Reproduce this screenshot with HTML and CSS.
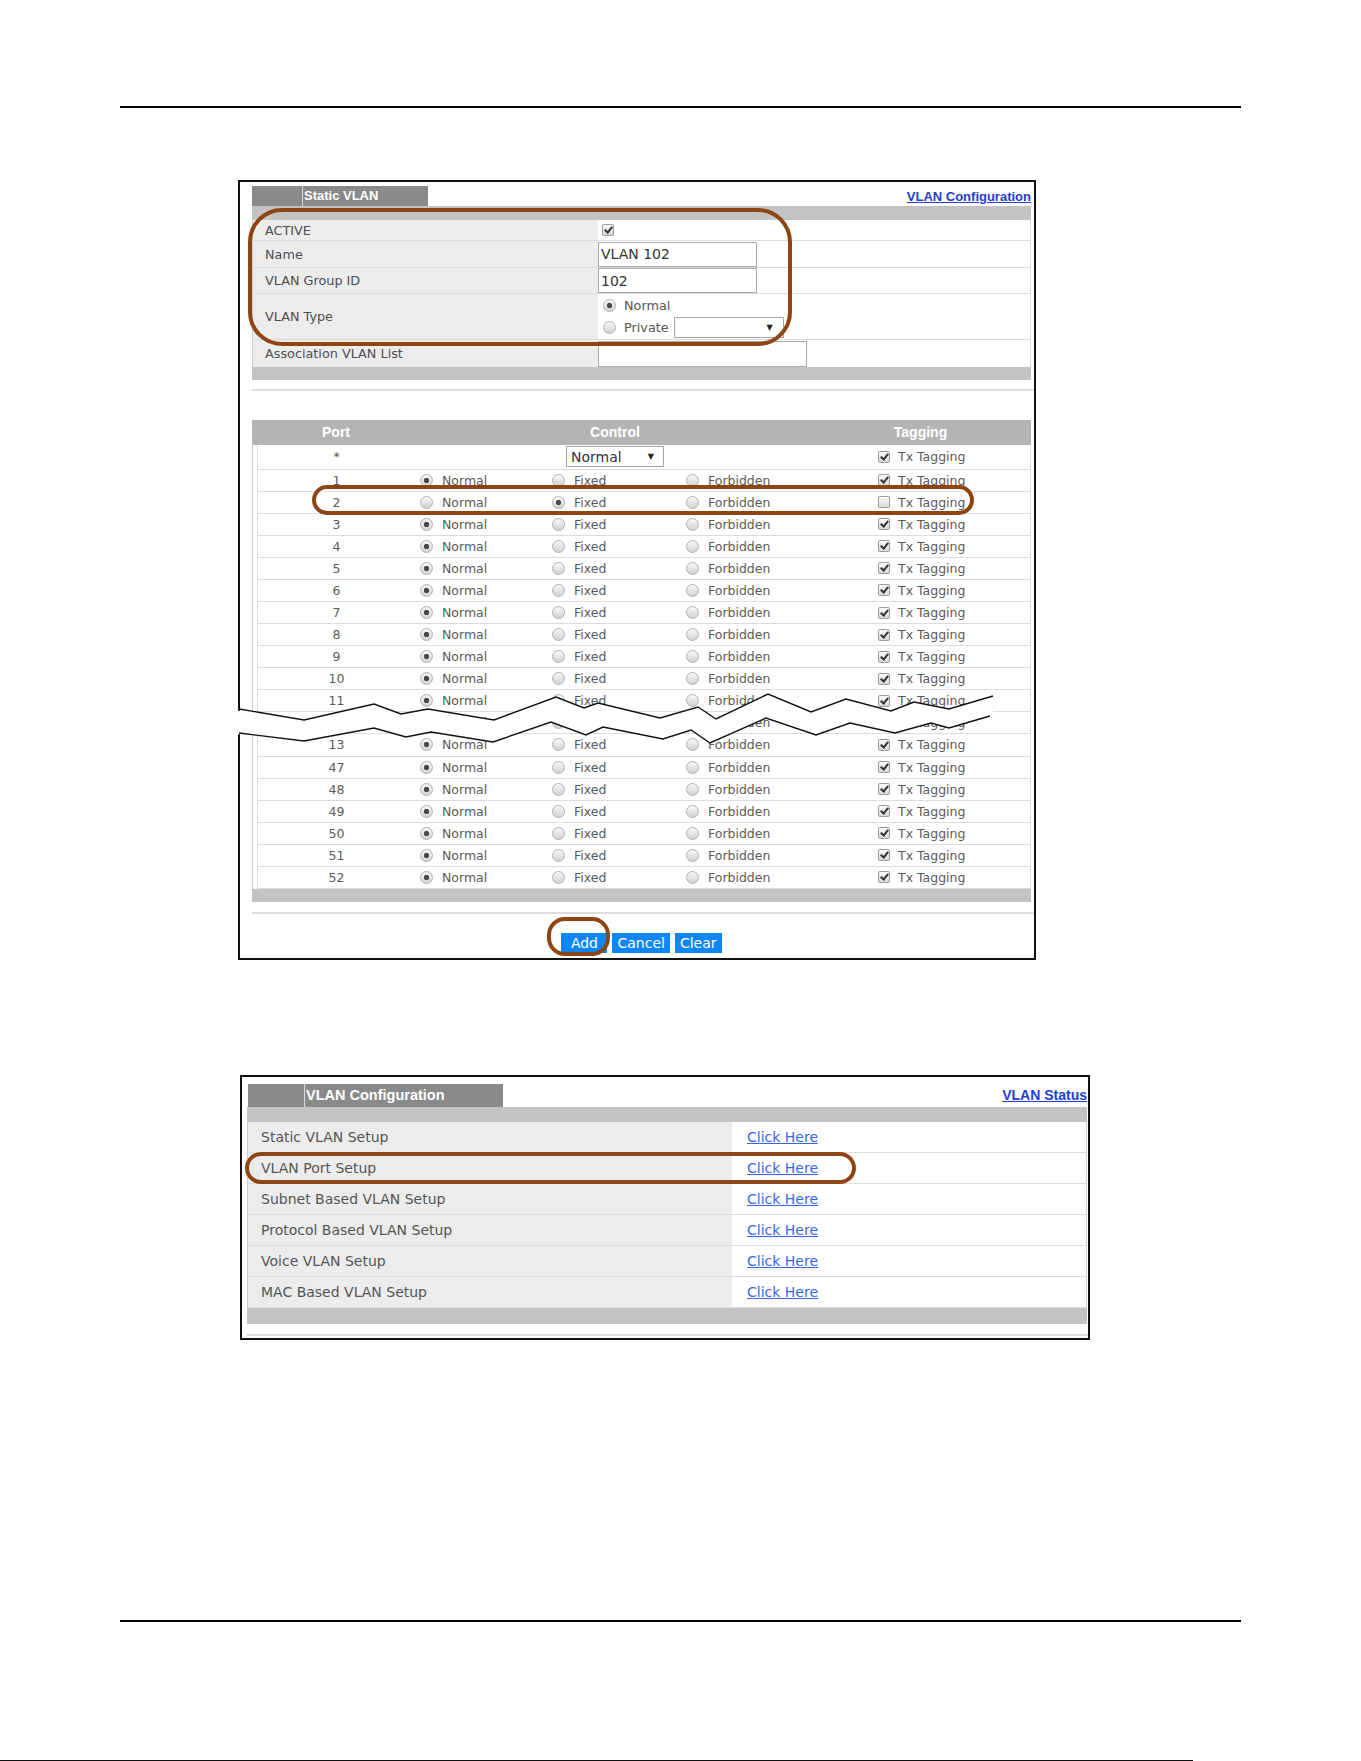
FILE: index.html
```html
<!DOCTYPE html>
<html lang="en">
<head>
    <meta charset="UTF-8">
    <meta name="viewport" content="width=device-width, initial-scale=1.0">
    <title>Static VLAN</title>
    <link rel="stylesheet" href="styles.css">
</head>
<body>
<div class="page">
    <div class="rule"></div>

    <!-- Static VLAN screen -->
    <div class="panel panel-static">
        <div class="tabbar">
            <div class="tab"><span class="tab-cap"></span><span class="tab-name">Static VLAN</span></div>
            <a href="#" class="tab-link">VLAN Configuration</a>
        </div>
        <div class="bar"></div>

        <div class="form">
            <div class="frow r-active">
                <div class="flabel">ACTIVE</div>
                <div class="fvalue"><input type="checkbox" class="cb" checked></div>
            </div>
            <div class="frow r-name">
                <div class="flabel">Name</div>
                <div class="fvalue"><input type="text" class="txt" value="VLAN 102"></div>
            </div>
            <div class="frow r-gid">
                <div class="flabel">VLAN Group ID</div>
                <div class="fvalue"><input type="text" class="txt" value="102"></div>
            </div>
            <div class="frow r-type">
                <div class="flabel">VLAN Type</div>
                <div class="fvalue type-opts">
                    <label class="opt"><input type="radio" class="rd" name="vtype" checked><span>Normal</span></label>
                    <label class="opt"><input type="radio" class="rd" name="vtype"><span>Private</span><span class="sel sel-private"></span></label>
                </div>
            </div>
            <div class="frow r-assoc">
                <div class="flabel">Association VLAN List</div>
                <div class="fvalue"><input type="text" class="txt txt-wide"></div>
            </div>
        </div>
        <div class="bar bar-thin"></div>
        <div class="sep"></div>

        <div class="phead"><span>Port</span><span>Control</span><span>Tagging</span></div>
        <div class="plist">
            <div class="prow prow-all">
                <span class="pnum">*</span>
                <div class="psel"><span class="sel sel-control">Normal</span></div>
                <label class="pc pc-tag"><input type="checkbox" class="cb" checked>Tx Tagging</label>
            </div>
            <div class="prow">
                <span class="pnum">1</span>
                <label class="pc pc-normal"><input type="radio" class="rd" name="p1" checked>Normal</label>
                <label class="pc"><input type="radio" class="rd" name="p1">Fixed</label>
                <label class="pc"><input type="radio" class="rd" name="p1">Forbidden</label>
                <label class="pc pc-tag"><input type="checkbox" class="cb" checked>Tx Tagging</label>
            </div>
            <div class="prow">
                <span class="pnum">2</span>
                <label class="pc pc-normal"><input type="radio" class="rd" name="p2">Normal</label>
                <label class="pc"><input type="radio" class="rd" name="p2" checked>Fixed</label>
                <label class="pc"><input type="radio" class="rd" name="p2">Forbidden</label>
                <label class="pc pc-tag"><input type="checkbox" class="cb">Tx Tagging</label>
            </div>
            <div class="prow">
                <span class="pnum">3</span>
                <label class="pc pc-normal"><input type="radio" class="rd" name="p3" checked>Normal</label>
                <label class="pc"><input type="radio" class="rd" name="p3">Fixed</label>
                <label class="pc"><input type="radio" class="rd" name="p3">Forbidden</label>
                <label class="pc pc-tag"><input type="checkbox" class="cb" checked>Tx Tagging</label>
            </div>
            <div class="prow">
                <span class="pnum">4</span>
                <label class="pc pc-normal"><input type="radio" class="rd" name="p4" checked>Normal</label>
                <label class="pc"><input type="radio" class="rd" name="p4">Fixed</label>
                <label class="pc"><input type="radio" class="rd" name="p4">Forbidden</label>
                <label class="pc pc-tag"><input type="checkbox" class="cb" checked>Tx Tagging</label>
            </div>
            <div class="prow">
                <span class="pnum">5</span>
                <label class="pc pc-normal"><input type="radio" class="rd" name="p5" checked>Normal</label>
                <label class="pc"><input type="radio" class="rd" name="p5">Fixed</label>
                <label class="pc"><input type="radio" class="rd" name="p5">Forbidden</label>
                <label class="pc pc-tag"><input type="checkbox" class="cb" checked>Tx Tagging</label>
            </div>
            <div class="prow">
                <span class="pnum">6</span>
                <label class="pc pc-normal"><input type="radio" class="rd" name="p6" checked>Normal</label>
                <label class="pc"><input type="radio" class="rd" name="p6">Fixed</label>
                <label class="pc"><input type="radio" class="rd" name="p6">Forbidden</label>
                <label class="pc pc-tag"><input type="checkbox" class="cb" checked>Tx Tagging</label>
            </div>
            <div class="prow">
                <span class="pnum">7</span>
                <label class="pc pc-normal"><input type="radio" class="rd" name="p7" checked>Normal</label>
                <label class="pc"><input type="radio" class="rd" name="p7">Fixed</label>
                <label class="pc"><input type="radio" class="rd" name="p7">Forbidden</label>
                <label class="pc pc-tag"><input type="checkbox" class="cb" checked>Tx Tagging</label>
            </div>
            <div class="prow">
                <span class="pnum">8</span>
                <label class="pc pc-normal"><input type="radio" class="rd" name="p8" checked>Normal</label>
                <label class="pc"><input type="radio" class="rd" name="p8">Fixed</label>
                <label class="pc"><input type="radio" class="rd" name="p8">Forbidden</label>
                <label class="pc pc-tag"><input type="checkbox" class="cb" checked>Tx Tagging</label>
            </div>
            <div class="prow">
                <span class="pnum">9</span>
                <label class="pc pc-normal"><input type="radio" class="rd" name="p9" checked>Normal</label>
                <label class="pc"><input type="radio" class="rd" name="p9">Fixed</label>
                <label class="pc"><input type="radio" class="rd" name="p9">Forbidden</label>
                <label class="pc pc-tag"><input type="checkbox" class="cb" checked>Tx Tagging</label>
            </div>
            <div class="prow">
                <span class="pnum">10</span>
                <label class="pc pc-normal"><input type="radio" class="rd" name="p10" checked>Normal</label>
                <label class="pc"><input type="radio" class="rd" name="p10">Fixed</label>
                <label class="pc"><input type="radio" class="rd" name="p10">Forbidden</label>
                <label class="pc pc-tag"><input type="checkbox" class="cb" checked>Tx Tagging</label>
            </div>
            <div class="prow">
                <span class="pnum">11</span>
                <label class="pc pc-normal"><input type="radio" class="rd" name="p11" checked>Normal</label>
                <label class="pc"><input type="radio" class="rd" name="p11">Fixed</label>
                <label class="pc"><input type="radio" class="rd" name="p11">Forbidden</label>
                <label class="pc pc-tag"><input type="checkbox" class="cb" checked>Tx Tagging</label>
            </div>
            <div class="prow">
                <span class="pnum">12</span>
                <label class="pc pc-normal"><input type="radio" class="rd" name="p12" checked>Normal</label>
                <label class="pc"><input type="radio" class="rd" name="p12">Fixed</label>
                <label class="pc"><input type="radio" class="rd" name="p12">Forbidden</label>
                <label class="pc pc-tag"><input type="checkbox" class="cb" checked>Tx Tagging</label>
            </div>
            <div class="prow">
                <span class="pnum">13</span>
                <label class="pc pc-normal"><input type="radio" class="rd" name="p13" checked>Normal</label>
                <label class="pc"><input type="radio" class="rd" name="p13">Fixed</label>
                <label class="pc"><input type="radio" class="rd" name="p13">Forbidden</label>
                <label class="pc pc-tag"><input type="checkbox" class="cb" checked>Tx Tagging</label>
            </div>
            <div class="prow">
                <span class="pnum">47</span>
                <label class="pc pc-normal"><input type="radio" class="rd" name="p47" checked>Normal</label>
                <label class="pc"><input type="radio" class="rd" name="p47">Fixed</label>
                <label class="pc"><input type="radio" class="rd" name="p47">Forbidden</label>
                <label class="pc pc-tag"><input type="checkbox" class="cb" checked>Tx Tagging</label>
            </div>
            <div class="prow">
                <span class="pnum">48</span>
                <label class="pc pc-normal"><input type="radio" class="rd" name="p48" checked>Normal</label>
                <label class="pc"><input type="radio" class="rd" name="p48">Fixed</label>
                <label class="pc"><input type="radio" class="rd" name="p48">Forbidden</label>
                <label class="pc pc-tag"><input type="checkbox" class="cb" checked>Tx Tagging</label>
            </div>
            <div class="prow">
                <span class="pnum">49</span>
                <label class="pc pc-normal"><input type="radio" class="rd" name="p49" checked>Normal</label>
                <label class="pc"><input type="radio" class="rd" name="p49">Fixed</label>
                <label class="pc"><input type="radio" class="rd" name="p49">Forbidden</label>
                <label class="pc pc-tag"><input type="checkbox" class="cb" checked>Tx Tagging</label>
            </div>
            <div class="prow">
                <span class="pnum">50</span>
                <label class="pc pc-normal"><input type="radio" class="rd" name="p50" checked>Normal</label>
                <label class="pc"><input type="radio" class="rd" name="p50">Fixed</label>
                <label class="pc"><input type="radio" class="rd" name="p50">Forbidden</label>
                <label class="pc pc-tag"><input type="checkbox" class="cb" checked>Tx Tagging</label>
            </div>
            <div class="prow">
                <span class="pnum">51</span>
                <label class="pc pc-normal"><input type="radio" class="rd" name="p51" checked>Normal</label>
                <label class="pc"><input type="radio" class="rd" name="p51">Fixed</label>
                <label class="pc"><input type="radio" class="rd" name="p51">Forbidden</label>
                <label class="pc pc-tag"><input type="checkbox" class="cb" checked>Tx Tagging</label>
            </div>
            <div class="prow">
                <span class="pnum">52</span>
                <label class="pc pc-normal"><input type="radio" class="rd" name="p52" checked>Normal</label>
                <label class="pc"><input type="radio" class="rd" name="p52">Fixed</label>
                <label class="pc"><input type="radio" class="rd" name="p52">Forbidden</label>
                <label class="pc pc-tag"><input type="checkbox" class="cb" checked>Tx Tagging</label>
            </div>
        </div>
        <div class="bar bar-thin"></div>
        <div class="sep sep-low"></div>

        <div class="buttons">
            <button class="btn">Add</button>
            <button class="btn">Cancel</button>
            <button class="btn">Clear</button>
        </div>

        <!-- torn-out band between port 11 and 13 -->
        <svg class="break" viewBox="228 180 810 790" width="810" height="790">
            <polygon fill="#fff" points="226,709 304,720 374,704 401,714 428,709 494,720 556,697 584,708 598,703 660,718 698,707 716,719 768,694 811,712 846,699 891,711 914,702 949,709 993,696 993,716 949,728 931,723 895,733 850,723 816,735 766,718 710,743 691,730 663,739 603,727 586,735 551,722 493,742 431,732 406,737 374,728 304,741 226,733"/>
            <polyline fill="none" stroke="#111" stroke-width="1.4" points="239,709 304,720 374,704 401,714 428,709 494,720 556,697 584,708 598,703 660,718 698,707 716,719 768,694 811,712 846,699 891,711 914,702 949,709 993,696"/>
            <polyline fill="none" stroke="#111" stroke-width="1.4" points="239,733 304,741 374,728 406,737 431,732 493,742 551,722 586,735 603,727 663,739 691,730 710,743 766,718 816,735 850,723 895,733 931,723 949,728 990,716"/>
        </svg>

        <div class="mark mark-form"></div>
        <div class="mark mark-port"></div>
        <div class="mark mark-add"></div>
    </div>

    <!-- VLAN Configuration screen -->
    <div class="panel panel-config">
        <div class="tabbar">
            <div class="tab"><span class="tab-cap"></span><span class="tab-name">VLAN Configuration</span></div>
            <a href="#" class="tab-link">VLAN Status</a>
        </div>
        <div class="bar"></div>
        <div class="clist">
            <div class="crow"><div class="clabel">Static VLAN Setup</div><div class="cvalue"><a href="#">Click Here</a></div></div>
            <div class="crow"><div class="clabel">VLAN Port Setup</div><div class="cvalue"><a href="#">Click Here</a></div></div>
            <div class="crow"><div class="clabel">Subnet Based VLAN Setup</div><div class="cvalue"><a href="#">Click Here</a></div></div>
            <div class="crow"><div class="clabel">Protocol Based VLAN Setup</div><div class="cvalue"><a href="#">Click Here</a></div></div>
            <div class="crow"><div class="clabel">Voice VLAN Setup</div><div class="cvalue"><a href="#">Click Here</a></div></div>
            <div class="crow"><div class="clabel">MAC Based VLAN Setup</div><div class="cvalue"><a href="#">Click Here</a></div></div>
        </div>
        <div class="bar bar-foot"></div>
        <div class="sep"></div>

        <div class="mark mark-portsetup"></div>
    </div>

    <div class="rule rule-bottom"></div>
    <div class="page-edge"></div>
</div>
</body>
</html>
```

FILE: styles.css
```css
html, body {
    margin: 0;
    overflow: hidden;
}
body {
    background: #fff;
    font-family: "DejaVu Sans", sans-serif;
    color: #555;
}
.page {
    height: 1761px;
    box-sizing: border-box;
    padding-top: 106px;
}
.rule {
    width: 1121px;
    height: 2px;
    margin-left: 120px;
    background: #000;
}
.rule-bottom {
    margin-top: 280px;
}
.page-edge {
    width: 1193px;
    height: 2px;
    margin-top: 138px;
    background: #111;
}

/* framed screenshots */
.panel {
    position: relative;
    box-sizing: border-box;
    border: 2px solid #111;
}
.panel-static {
    width: 798px;
    margin: 72px 0 0 238px;
    padding: 4px 3px 5px 12px;
}
.panel-config {
    width: 850px;
    margin: 115px 0 0 240px;
    padding: 7px 1px 1px 5px;
}

.tabbar {
    display: flex;
    justify-content: space-between;
    align-items: center;
    height: 20px;
}
.tab {
    display: flex;
    height: 100%;
    background: #8a8a8a;
}
.tab-cap {
    width: 50px;
    border-right: 1px solid #d9d9d9;
}
.tab-name {
    width: 124px;
    padding-left: 1px;
    color: #fff;
    font: bold 13px/20px "Liberation Sans", Arial, sans-serif;
}
.tab-link {
    color: #1d3ecf;
    font: bold 13px "Liberation Sans", Arial, sans-serif;
    text-decoration: underline;
}
.panel-config .tabbar {
    height: 23px;
}
.panel-config .tab {
    margin-left: 1px;
}
.panel-config .tab-cap {
    width: 56px;
}
.panel-config .tab-name {
    width: 197px;
    font-size: 14.5px;
    line-height: 23px;
}
.panel-config .tab-link {
    font-size: 14px;
}

.bar {
    height: 14px;
    background: #c3c3c3;
}
.bar-thin {
    height: 13px;
}
.panel-config .bar {
    height: 15px;
}
.panel-config .bar-foot {
    height: 16px;
}
.sep {
    height: 2px;
    margin: 9px -3px 29px 0;
    background: #dedede;
}
.sep-low {
    margin: 10px -3px 19px 0;
}
.panel-config .sep {
    margin: 10px -1px 1px 0;
}

/* form controls */
.rd {
    appearance: none;
    -webkit-appearance: none;
    box-sizing: border-box;
    flex: none;
    width: 13px;
    height: 13px;
    margin: 0;
    border: 1px solid #b0b0b0;
    border-radius: 50%;
    background: linear-gradient(#f8f8f8, #d2d2d2);
}
.rd:checked {
    background: radial-gradient(circle, #4a4a4a 0 2.4px, transparent 3px), linear-gradient(#f8f8f8, #d2d2d2);
}
.cb {
    appearance: none;
    -webkit-appearance: none;
    position: relative;
    box-sizing: border-box;
    flex: none;
    width: 12px;
    height: 12px;
    margin: 0;
    border: 1px solid #9c9c9c;
    border-radius: 2px;
    background: linear-gradient(#fbfbfb, #d8d8d8);
}
.cb:checked::after {
    content: "";
    position: absolute;
    left: 3px;
    top: 0;
    width: 3px;
    height: 6px;
    border: solid #333;
    border-width: 0 2px 2px 0;
    transform: rotate(40deg);
}
.txt {
    box-sizing: border-box;
    width: 159px;
    height: 25px;
    margin: 0;
    padding: 0 2px;
    border: 1px solid #a9a9a9;
    font: 14px "DejaVu Sans", sans-serif;
    color: #333;
    outline: none;
}
.txt-wide {
    width: 209px;
    height: 26px;
}
.sel {
    box-sizing: border-box;
    display: flex;
    align-items: center;
    justify-content: space-between;
    height: 21px;
    border: 1px solid #a6a6a6;
    background: #fff;
    font-size: 14px;
    color: #333;
}
.sel::after {
    content: "\25BC";
    font-size: 8px;
    color: #222;
}
.sel-private {
    width: 110px;
    margin-left: -3px;
    justify-content: flex-end;
    padding-right: 10px;
}
.sel-control {
    width: 98px;
    padding: 0 9px 0 4px;
}

/* Static VLAN form */
.form {
    border-left: 1px solid #d0d0d0;
    border-right: 1px solid #dcdcdc;
}
.frow {
    display: grid;
    grid-template-columns: 345px 1fr;
    box-sizing: border-box;
    border-bottom: 1px solid #dcdcdc;
}
.frow:last-child {
    border-bottom: 0;
}
.flabel {
    display: flex;
    align-items: center;
    padding-left: 12px;
    background: #ececec;
    font-size: 12.8px;
    color: #4f4f4f;
}
.fvalue {
    display: flex;
    align-items: center;
}
.r-active { height: 21px; }
.r-name { height: 27px; }
.r-gid { height: 26px; }
.r-type { height: 46px; }
.r-assoc { height: 27px; }
.r-active .fvalue {
    padding-left: 4px;
}
.type-opts {
    flex-direction: column;
    align-items: flex-start;
    gap: 1px;
    padding: 1px 0 0 5px;
}
.opt {
    display: flex;
    align-items: center;
    gap: 8px;
    height: 21px;
    font-size: 12.8px;
    color: #555;
}

/* port table */
.phead {
    display: grid;
    grid-template-columns: 168px 390px 1fr;
    height: 25px;
    background: #b4b4b4;
    color: #fff;
    font: bold 14px/25px "Liberation Sans", Arial, sans-serif;
    text-align: center;
}
.plist {
    border-left: 1px solid #c8c8c8;
}
.prow {
    display: grid;
    grid-template-columns: 157px 137px 134px 192px 1fr;
    align-items: center;
    box-sizing: border-box;
    height: 22.08px;
    margin-left: 4px;
    border-left: 1px solid #dcdcdc;
    border-right: 1px solid #dcdcdc;
    border-bottom: 1px solid #dcdcdc;
    font-size: 12.5px;
    color: #5a5a5a;
}
.prow-all {
    height: 24.5px;
}
.pnum {
    text-align: center;
}
.pc {
    display: flex;
    align-items: center;
    gap: 9px;
}
.pc-normal {
    padding-left: 5px;
}
.pc-tag {
    gap: 8px;
}
.psel {
    grid-column: 2 / 5;
    padding-left: 151px;
}

.buttons {
    display: flex;
    justify-content: center;
    gap: 5px;
    height: 20px;
}
.btn {
    box-sizing: border-box;
    min-width: 46px;
    height: 20px;
    padding: 0 5px;
    border: 0;
    background: #0e86f6;
    color: #fff;
    font: 14px/20px "DejaVu Sans", sans-serif;
}

/* VLAN configuration list */
.clist {
    border-left: 1px solid #d0d0d0;
    border-right: 1px solid #d0d0d0;
}
.crow {
    display: grid;
    grid-template-columns: 484px 1fr;
    box-sizing: border-box;
    height: 31px;
    border-bottom: 1px solid #dcdcdc;
}
.clabel {
    display: flex;
    align-items: center;
    padding-left: 13px;
    background: #ececec;
    font-size: 14px;
    color: #555;
}
.cvalue {
    display: flex;
    align-items: center;
    padding-left: 15px;
}
.cvalue a {
    color: #3a67e8;
    font-size: 14px;
    text-decoration: underline;
}

/* annotations drawn over the screenshots */
.break {
    position: absolute;
    left: -12px;
    top: -2px;
    overflow: visible;
    pointer-events: none;
}
.mark {
    position: absolute;
    box-sizing: border-box;
    border: 4px solid #8e4513;
    pointer-events: none;
}
.mark-form {
    left: 8px;
    top: 26px;
    width: 544px;
    height: 138px;
    border-radius: 34px;
}
.mark-port {
    left: 72px;
    top: 303px;
    width: 662px;
    height: 30px;
    border-radius: 15px;
}
.mark-add {
    left: 307px;
    top: 735px;
    width: 63px;
    height: 39px;
    border-radius: 18px;
}
.mark-portsetup {
    left: 3px;
    top: 75px;
    width: 611px;
    height: 32px;
    border-radius: 16px;
}
```
